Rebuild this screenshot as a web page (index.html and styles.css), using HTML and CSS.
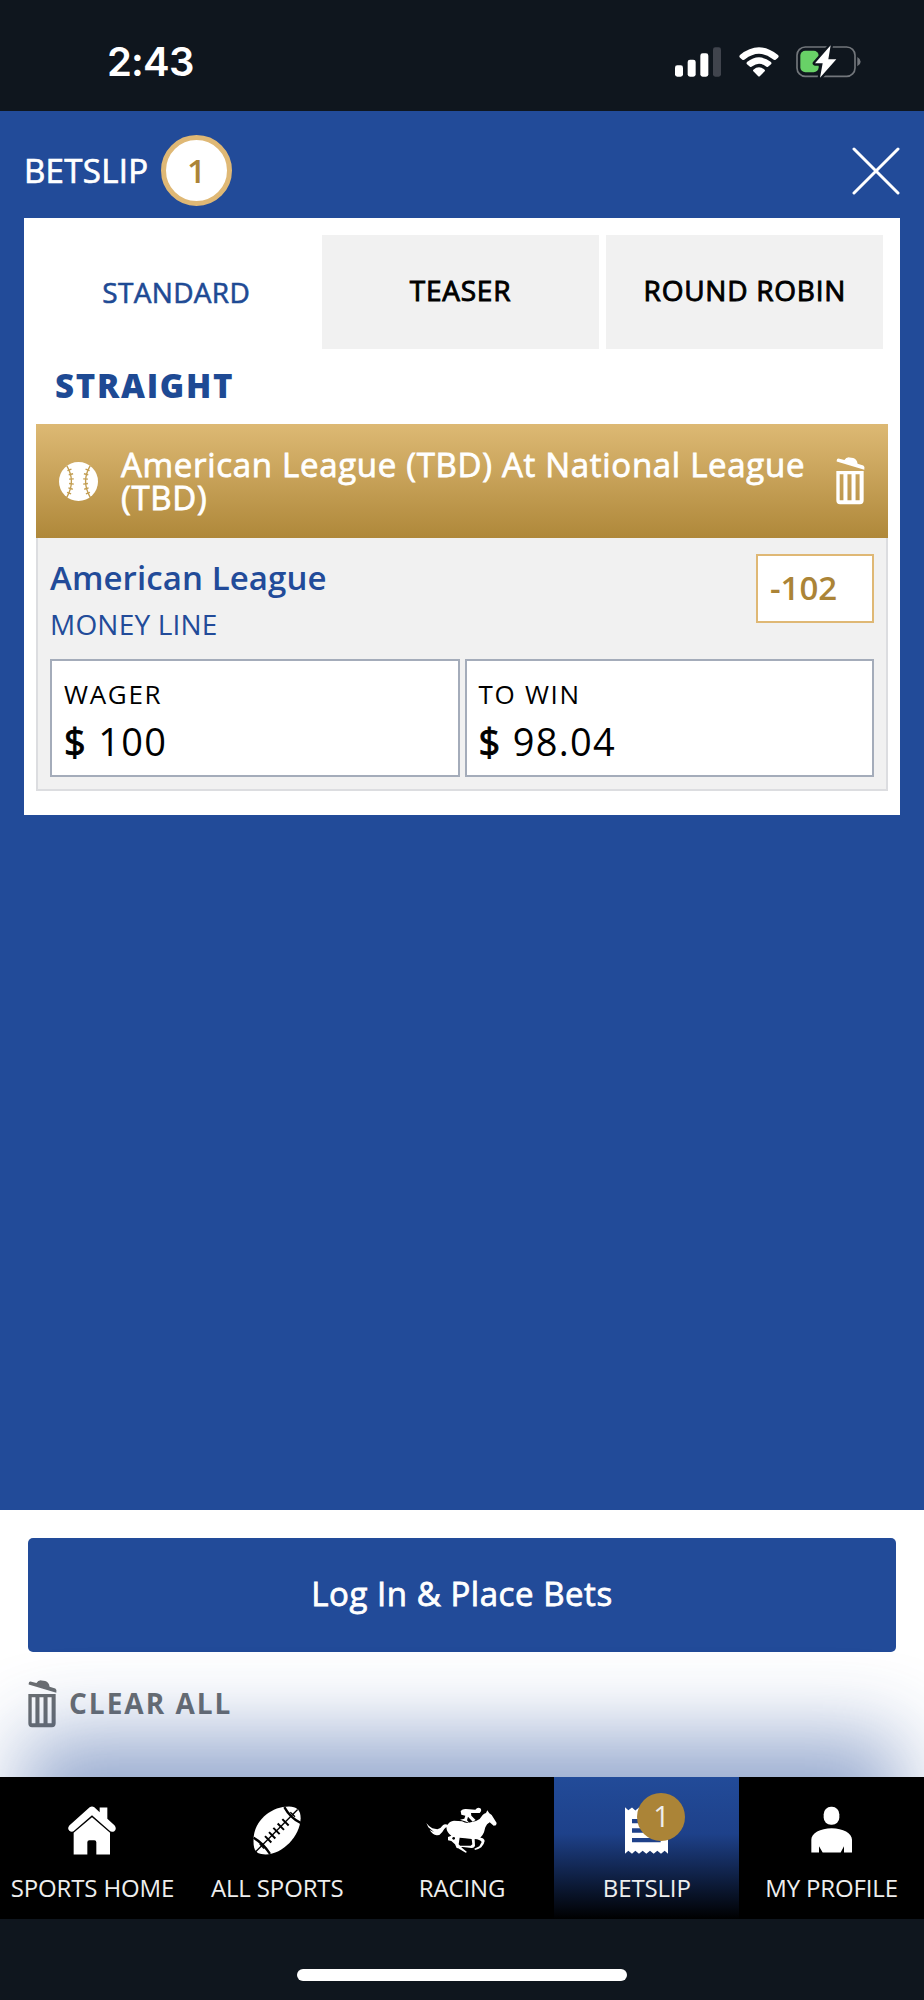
FILE: index.html
```
<!DOCTYPE html>
<html lang="en">
<head>
  <meta charset="UTF-8">
  <meta name="viewport" content="width=device-width, initial-scale=1.0">
  <title>Betslip</title>
  <link rel="stylesheet" href="styles.css">
</head>
<body>
  <!-- Status bar -->
  <div class="status-bar">
    <span class="time">2:43</span>
    <div class="status-icons">
      <svg width="46" height="30" viewBox="0 0 138 90" fill="#fff">
        <rect x="0" y="55" width="24" height="34" rx="7"/>
        <rect x="38" y="38" width="24" height="51" rx="7"/>
        <rect x="76" y="19" width="24" height="70" rx="7"/>
        <rect x="114" y="1" width="24" height="88" rx="7" fill="#40444d"/>
      </svg>
      <svg class="wifi" width="40" height="30" viewBox="0 0 120 90" fill="#fff">
        <path d="M3 24Q60-22 117 24Q121 28 117 32L110 38Q106 41 102 37Q60 4 18 37Q14 41 10 38L3 32Q-1 28 3 24Z"/>
        <path d="M24 45Q60 17 96 45Q99 49 96 52L87 59Q84 61 80 58Q60 43 40 58Q36 61 33 59L24 52Q21 49 24 45Z"/>
        <path d="M43 68Q60 54 77 68Q79 71 77 73L63 87Q60 90 57 87L43 73Q41 71 43 68Z"/>
      </svg>
      <svg width="66" height="33" viewBox="0 0 198 99">
        <rect x="3" y="6" width="174" height="88" rx="25" fill="none" stroke="#72767b" stroke-width="5"/>
        <path d="M184 36Q194 42 194 50T184 64Z" fill="#72767b"/>
        <rect x="13" y="17" width="55" height="65" rx="15" fill="#68d167"/>
        <path d="M104 1L57 55H80L72 98L121 43H97Z" fill="#fff" stroke="#0f161e" stroke-width="14" paint-order="stroke" stroke-linejoin="round"/>
      </svg>
    </div>
  </div>

  <!-- Betslip -->
  <main>
    <header>
      <h1>BETSLIP</h1>
      <span class="count">1</span>
      <button class="close" aria-label="Close">
        <svg width="48" height="48" viewBox="0 0 48 48" stroke="#fff" stroke-width="3" stroke-linecap="round">
          <path d="M2 2L46 46M46 2L2 46"/>
        </svg>
      </button>
    </header>

    <section class="slip">
      <div class="tabs">
        <button class="tab active">STANDARD</button>
        <button class="tab">TEASER</button>
        <button class="tab">ROUND ROBIN</button>
      </div>
      <h2>STRAIGHT</h2>

      <div class="bet">
        <div class="bet-header">
          <svg class="ball" width="39" height="39" viewBox="0 0 116 116">
            <circle cx="58" cy="58" r="58" fill="#fff"/>
            <g fill="none" stroke="#c39e52">
              <path d="M23 11Q51 58 23 105M93 11Q65 58 93 105" stroke-width="4"/>
              <path d="M25 26L37 21M29 38L42 35M30 51L44 50M30 64L44 66M28 77L41 81M24 90L36 95M91 26L79 21M87 38L74 35M86 51L72 50M86 64L72 66M88 77L75 81M92 90L80 95" stroke-width="4"/>
            </g>
          </svg>
          <h3>American League (TBD) At National League (TBD)</h3>
          <button class="remove" aria-label="Remove">
            <svg class="trash" width="29" height="48" viewBox="0 0 86 142">
              <path d="M2 11Q2 3 10 5L25 9Q30 0 40 1L51 3Q62 6 64 20L81 25Q86 28 84 38L2 13Z"/>
              <path fill-rule="evenodd" d="M1 41H82V128Q82 140 71 140H12Q1 140 1 128ZM11 51V128H22V51ZM34 51V128H46V51ZM58 51V128H70V51Z"/>
            </svg>
          </button>
        </div>
        <div class="bet-body">
          <div class="bet-info">
            <div>
              <p class="team">American League</p>
              <p class="market">MONEY LINE</p>
            </div>
            <span class="odds">-102</span>
          </div>
          <div class="stakes">
            <div class="stake">
              <label>WAGER</label>
              <p><b>$</b> <span>100</span></p>
            </div>
            <div class="stake">
              <label>TO WIN</label>
              <p><b>$</b> <span>98.04</span></p>
            </div>
          </div>
        </div>
      </div>
    </section>
  </main>

  <footer>
    <button class="place-bets">Log In &amp; Place Bets</button>
    <button class="clear-all">
      <svg class="trash" width="29" height="48" viewBox="0 0 86 142">
        <path d="M2 11Q2 3 10 5L25 9Q30 0 40 1L51 3Q62 6 64 20L81 25Q86 28 84 38L2 13Z"/>
        <path fill-rule="evenodd" d="M1 41H82V128Q82 140 71 140H12Q1 140 1 128ZM11 51V128H22V51ZM34 51V128H46V51ZM58 51V128H70V51Z"/>
      </svg>
      <span>CLEAR ALL</span>
    </button>
  </footer>

  <!-- Bottom navigation -->
  <div class="bottom">
    <nav>
      <a>
        <svg width="48" height="49" viewBox="206 109 144 146" fill="#fff">
          <path d="M271 112Q278 108 285 112L301 127V113H324V147L346 167Q353 177 345 184Q337 189 330 182L278 136L225 182Q218 189 210 183Q203 176 210 167Z"/>
          <path d="M278 142L332 189V254H291V217Q291 211 285 211H270Q264 211 264 217V254H223V189Z"/>
        </svg>
        <span>SPORTS HOME</span>
      </a>
      <a>
        <svg width="48" height="49" viewBox="760 109 144 146">
          <path fill="#fff" d="M762 203C766 150 815 110 868 110C890 110 903 120 903 145C901 199 850 252 798 254C771 254 759 245 762 203Z"/>
          <g fill="none" stroke="#000">
            <path d="M854 112Q872 145 903 159M762 204Q790 220 811 252" stroke-width="7"/>
            <path d="M768 246L894 119" stroke-width="4"/>
            <path d="M796 199L815 218M808 187L827 206M821 174L840 193M834 161L853 180M848 148L867 167" stroke-width="6"/>
            <path d="M780 222L793 236M872 127L886 141" stroke-width="4"/>
          </g>
        </svg>
        <span>ALL SPORTS</span>
      </a>
      <a>
        <svg width="72" height="49" viewBox="170 109 216 147" fill="#fff">
          <path d="M171 160Q179 171 189 176L204 179Q214 177 219 168Q226 162 235 165Q240 154 254 153L278 155Q286 160 295 160L320 154Q334 148 340 136Q344 131 350 130L354 122L360 131L367 136L382 160L380 167L373 168L361 158Q352 162 348 173L344 188Q340 198 333 204Q345 205 346 214Q344 225 336 233Q327 240 317 241L315 237L330 230L337 217Q332 209 316 208L317 229Q314 236 306 235L274 231L293 247L289 249L260 232L272 228L304 228L309 224L307 208Q286 205 271 204L268 224L282 239L262 235L257 224L246 214L236 212L236 202L246 198Q232 189 231 172Q224 177 219 187Q211 198 202 197Q190 195 181 181L194 187L177 173Z"/>
          <path d="M274 124Q280 117 290 118L318 120Q325 111 333 116Q339 122 331 130L321 130L305 130L306 138L319 151L310 156L296 141L293 152L300 160L287 155L272 150L285 147L288 138L276 135Z"/>
          <circle cx="253" cy="206" r="4" fill="#000"/>
        </svg>
        <span>RACING</span>
      </a>
      <a class="active">
        <svg width="43" height="49" viewBox="226 109 129 146">
          <path fill="#fff" d="M226 112L236 121L247 113L257 122L268 113L279 122L290 113L301 122L312 113L323 122L334 113L345 122L355 113V252L345 243L334 252L323 243L312 252L301 243L290 252L279 243L268 252L257 243L247 252L236 243L226 252Z"/>
          <path stroke="#1e418a" stroke-width="13" d="M247 154H333M247 182H333M247 211H333"/>
        </svg>
        <span class="nav-count">1</span>
        <span>BETSLIP</span>
      </a>
      <a>
        <svg width="41" height="49" viewBox="784 109 123 146" fill="#fff">
          <rect x="822" y="111" width="47" height="54" rx="22"/>
          <path d="M785 248V210C785 190 812 175 846 175S907 190 907 210V248H883V229L873 248H819L808 229V248Z"/>
        </svg>
        <span>MY PROFILE</span>
      </a>
    </nav>
    <div class="home-indicator"></div>
  </div>
</body>
</html>
```
FILE: styles.css
```
* {
  margin: 0;
  padding: 0;
  box-sizing: border-box;
}
body {
  font-family: 'Open Sans', sans-serif;
  background: #224b99;
  color: #000;
  height: 2000px;
  display: flex;
  flex-direction: column;
  overflow: hidden;
}
button {
  background: none;
  border: none;
  font-family: inherit;
  cursor: pointer;
}
svg {
  display: block;
  flex-shrink: 0;
}

/* Status bar */
.status-bar {
  background: #0f161e;
  height: 111px;
  flex-shrink: 0;
  display: flex;
  justify-content: space-between;
  padding: 0 62px 0 107px;
}
.time {
  font-family: 'Inter', sans-serif;
  font-size: 40px;
  font-weight: 600;
  letter-spacing: -0.8px;
  line-height: 48px;
  padding-top: 38px;
  color: #fff;
}
.status-icons {
  display: flex;
  align-items: flex-start;
  padding-top: 47px;
}
.status-icons .wifi {
  margin: 0 17px 0 18px;
}
.status-icons svg:last-child {
  margin-top: -2px;
}

/* Betslip */
main {
  flex: 1;
  padding: 0 24px;
}
header {
  height: 107px;
  display: flex;
  align-items: center;
  padding-top: 12px;
}
h1 {
  font-size: 33px;
  font-weight: 400;
  letter-spacing: 0.3px;
  line-height: 40px;
  color: #fff;
  width: 137px;
  -webkit-text-stroke: 0.7px;
}
.count {
  width: 71px;
  height: 71px;
  border: 5px solid #dfb875;
  border-radius: 50%;
  background: #fff;
  color: #ab8437;
  font-size: 33px;
  font-weight: 600;
  line-height: 61px;
  text-align: center;
}
.close {
  margin-left: auto;
}
.slip {
  background: #fff;
  height: 597px;
  padding: 17px 12px 0;
}
.tabs {
  display: flex;
  gap: 7px;
  padding: 0 4.5px 0 1.5px;
}
.tab {
  flex: 1;
  height: 114px;
  background: #f1f1f1;
  font-size: 28px;
  font-weight: 400;
  letter-spacing: 0.75px;
  line-height: 40px;
  padding-bottom: 4px;
  -webkit-text-stroke: 0.9px;
}
.tab.active {
  background: #fff;
  color: #1e4a94;
  letter-spacing: 0.35px;
  padding-bottom: 1px;
  -webkit-text-stroke: 0.6px;
}
h2 {
  font-size: 33px;
  font-weight: 800;
  letter-spacing: 1.7px;
  line-height: 73px;
  padding: 0 0 2px 19px;
  color: #1e4a94;
}
.bet-header {
  height: 114px;
  background: linear-gradient(#ddb974, #af883a);
  display: flex;
  align-items: center;
  padding: 0 23px;
}
.bet-header h3 {
  width: 712px;
  margin-left: 23px;
  padding-bottom: 1px;
  font-size: 33px;
  font-weight: 400;
  letter-spacing: 0.7px;
  line-height: 33px;
  color: #fff;
  -webkit-text-stroke: 0.8px;
}
.remove {
  margin-left: auto;
}
.remove .trash {
  fill: #fff;
}
.bet-body {
  height: 253px;
  background: #f1f1f1;
  border: 2px solid #dcdde0;
  border-top: none;
  padding: 16px 12px 0;
}
.bet-info {
  display: flex;
  justify-content: space-between;
  height: 105px;
}
.team {
  font-size: 33px;
  font-weight: 600;
  letter-spacing: 0.1px;
  line-height: 46px;
  padding-top: 1px;
  color: #224b99;
}
.market {
  font-size: 28px;
  letter-spacing: 0.2px;
  line-height: 46px;
  color: #224b99;
}
.odds {
  width: 118px;
  height: 69px;
  border: 2px solid #dfb875;
  background: #fff;
  padding-left: 12px;
  font-size: 33px;
  font-weight: 600;
  line-height: 63px;
  color: #ab8437;
}
.stakes {
  display: flex;
  gap: 5px;
}
.stake {
  flex: 1;
  height: 118px;
  background: #fff;
  border: 2px solid #a4acba;
  padding: 14px 12px;
}
.stake label {
  display: block;
  font-size: 26px;
  letter-spacing: 1.7px;
  line-height: 38px;
}
.stake p {
  font-size: 38px;
  letter-spacing: 1.3px;
  line-height: 56px;
}
.stake b {
  font-weight: 400;
  -webkit-text-stroke: 0.9px;
}

/* Footer */
footer {
  height: 267px;
  flex-shrink: 0;
  background: #fff;
  padding: 28px 28px 0;
}
.place-bets {
  display: block;
  width: 868px;
  height: 114px;
  padding-bottom: 4px;
  border-radius: 5px;
  background: #224b99;
  color: #fff;
  font-size: 33px;
  font-weight: 400;
  letter-spacing: 0.55px;
  -webkit-text-stroke: 0.8px;
}
.clear-all {
  display: flex;
  gap: 12px;
  margin-top: 28px;
  color: #6b6e70;
  font-size: 28px;
  font-weight: 700;
  letter-spacing: 2px;
  line-height: 46px;
}
.clear-all .trash {
  fill: #6b6e70;
}

/* Bottom navigation */
.bottom {
  position: relative;
  height: 223px;
  flex-shrink: 0;
  background: #0f161e;
  box-shadow: 0 -66px 80px -24px rgba(34, 75, 153, 0.47);
}
nav {
  display: flex;
  height: 142px;
  background: #000;
}
nav a {
  position: relative;
  flex: 1;
  display: flex;
  flex-direction: column;
  align-items: center;
  gap: 15px;
  padding-top: 29px;
  color: #eee;
  font-size: 24px;
  letter-spacing: -0.15px;
  line-height: 36px;
  white-space: nowrap;
}
nav a.active {
  background: linear-gradient(#224b99, #1e418a 40%, #000);
}
.nav-count {
  position: absolute;
  left: 83px;
  top: 16px;
  width: 48px;
  height: 48px;
  border-radius: 50%;
  background: #ab8437;
  font-size: 29px;
  line-height: 46px;
  text-align: center;
}
.home-indicator {
  width: 330px;
  height: 12px;
  margin: 50px auto 0;
  border-radius: 6px;
  background: #fff;
}
```
